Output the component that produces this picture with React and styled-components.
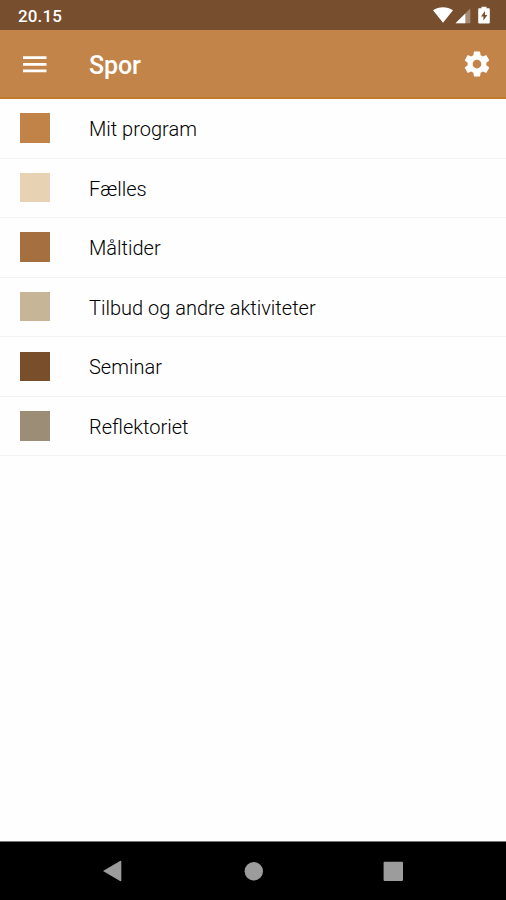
import React from "react";
import styled, { createGlobalStyle } from "styled-components";

const GlobalStyle = createGlobalStyle`
  *, *::before, *::after { box-sizing: border-box; }
  body { margin: 0; background: #fff; font-family: Roboto, "Liberation Sans", sans-serif; }
`;

const Screen = styled.div`
  display: flex;
  flex-direction: column;
  width: 506px;
  height: 900px;
  background: #fefefe;
  overflow: hidden;
`;

const StatusBar = styled.header`
  display: flex;
  align-items: center;
  justify-content: space-between;
  flex: none;
  height: 30px;
  padding: 2px 15px 0 18px;
  background: #774e2e;
  color: #fff;
`;

const Clock = styled.span`
  font-size: 17px;
  line-height: 20px;
  font-weight: 500;
  letter-spacing: 0.15px;
`;

const StatusIcons = styled.svg`
  display: block;
  width: 60px;
  height: 20px;
`;

const AppBar = styled.div`
  display: flex;
  align-items: center;
  flex: none;
  height: 69px;
  padding: 0 14px 0 23px;
  background: #c28449;
  border-bottom: 2px solid #c07a2d;
  color: #fff;
`;

const IconButton = styled.button`
  display: flex;
  padding: 0;
  border: 0;
  background: none;
  color: inherit;
`;

const Title = styled.h1`
  flex: 1;
  margin: 4px 0 0 42px;
  font-size: 25px;
  line-height: 30px;
  font-weight: 500;
  letter-spacing: -0.15px;
`;

const TrackList = styled.ul`
  flex: 1;
  margin: 0;
  padding: 0;
  list-style: none;
`;

const Track = styled.li`
  display: flex;
  align-items: center;
  height: 59.55px;
  padding-left: 20px;
  border-bottom: 1px solid #f3f3f3;
`;

const Swatch = styled.span`
  width: 30px;
  height: 29.5px;
  margin: 0 39px 0.4px 0;
  background: ${({ $color }) => $color};
`;

const Label = styled.span`
  margin-top: 2px;
  font-size: 20px;
  line-height: 24px;
  font-weight: 300;
  color: #000;
`;

const NavBar = styled.nav`
  flex: none;
  height: 59px;
  background: #000;
  border-top: 1px solid #777;
`;

const NavIcons = styled.svg`
  display: block;
  width: 506px;
  height: 58px;
  fill: #9c9c9c;
`;

const tracks = [
  { name: "Mit program", color: "#c28349" },
  { name: "Fælles", color: "#e8d2b4" },
  { name: "Måltider", color: "#a56f40" },
  { name: "Tilbud og andre aktiviteter", color: "#c6b596" },
  { name: "Seminar", color: "#794e2b" },
  { name: "Reflektoriet", color: "#9b8d76" },
];

export default function App() {
  return (
    <>
      <GlobalStyle />
      <Screen>
        <StatusBar>
          <Clock>20.15</Clock>
          <StatusIcons viewBox="0 0 60 20" fill="#fff">
            <path d="M2 4.2C7.7.2 16.3.2 22 4.2L12 16.8Z" />
            <path d="M39.3 2.4V17.2H24.5Z" opacity=".35" />
            <path d="M34.3 7.4V17.2H24.5Z" />
            <path
              fillRule="evenodd"
              d="M50.5 2.2V.7h5v1.5h2.3a1 1 0 0 1 1 1V16.4a1 1 0 0 1-1 1h-9.6a1 1 0 0 1-1-1V3.2a1 1 0 0 1 1-1ZM54 5.1l-4 5.3h2.4v4.2l4-5.5H54Z"
            />
          </StatusIcons>
        </StatusBar>
        <AppBar>
          <IconButton aria-label="Menu">
            <svg width="24" height="18" viewBox="0 0 24 18" fill="currentColor">
              <path d="M0 1.2h23.5v2.7H0zM0 8h23.5v2.7H0zM0 14.6h23.5v2.7H0z" />
            </svg>
          </IconButton>
          <Title>Spor</Title>
          <IconButton aria-label="Indstillinger">
            <svg width="30" height="30" viewBox="0 0 24 24" fill="currentColor">
              <path d="M19.43 12.98c.04-.32.07-.64.07-.98s-.03-.66-.07-.98l2.11-1.65c.19-.15.24-.42.12-.64l-2-3.46c-.12-.22-.39-.3-.61-.22l-2.49 1c-.52-.4-1.08-.73-1.69-.98l-.38-2.65C14.46 2.18 14.25 2 14 2h-4c-.25 0-.46.18-.49.42l-.38 2.65c-.61.25-1.17.59-1.69.98l-2.49-1c-.23-.09-.49 0-.61.22l-2 3.46c-.13.22-.07.49.12.64l2.11 1.65c-.04.32-.07.65-.07.98s.03.66.07.98l-2.11 1.65c-.19.15-.24.42-.12.64l2 3.46c.12.22.39.3.61.22l2.49-1c.52.4 1.08.73 1.69.98l.38 2.65c.03.24.24.42.49.42h4c.25 0 .46-.18.49-.42l.38-2.65c.61-.25 1.17-.59 1.69-.98l2.49 1c.23.09.49 0 .61-.22l2-3.46c.12-.22.07-.49-.12-.64l-2.11-1.65zM12 15.5c-1.93 0-3.5-1.57-3.5-3.5s1.57-3.5 3.5-3.5 3.5 1.57 3.5 3.5-1.57 3.5-3.5 3.5z" />
            </svg>
          </IconButton>
        </AppBar>
        <TrackList>
          {tracks.map((track) => (
            <Track key={track.name}>
              <Swatch $color={track.color} />
              <Label>{track.name}</Label>
            </Track>
          ))}
        </TrackList>
        <NavBar>
          <NavIcons viewBox="0 0 506 58">
            <path d="M103 29 120 19q1.3-.6 1.3.8v18.4q0 1.4-1.3.8Z" />
            <circle cx="253.8" cy="29.3" r="9.2" />
            <rect x="383.6" y="19.7" width="19.4" height="19.2" rx="1" />
          </NavIcons>
        </NavBar>
      </Screen>
    </>
  );
}
